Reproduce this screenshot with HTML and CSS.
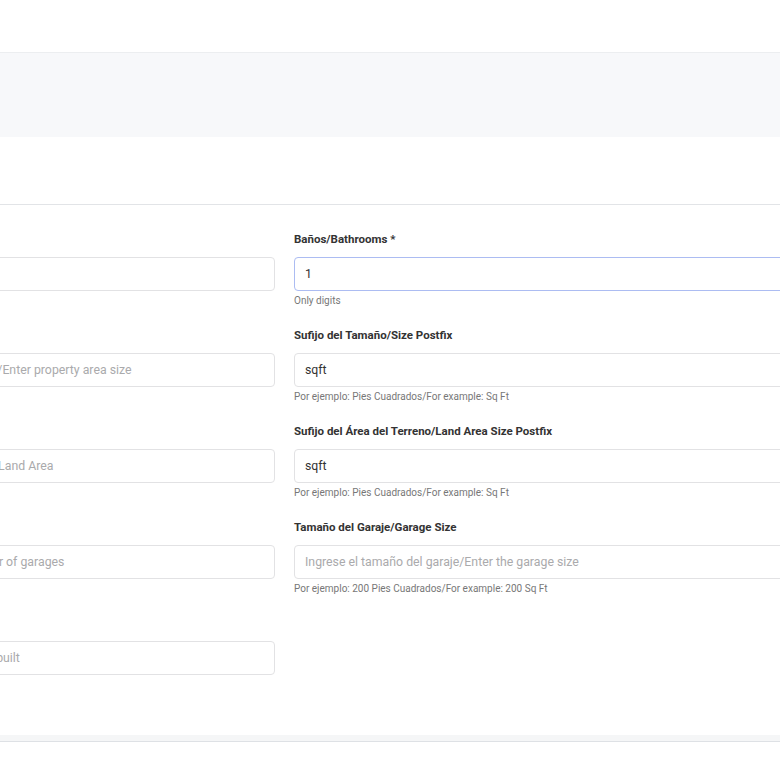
FILE: index.html
```html
<!DOCTYPE html>
<html lang="es">

<head>
    <meta charset="UTF-8">
    <meta name="viewport" content="width=device-width, initial-scale=1.0">
    <title>Detalles de la propiedad</title>
    <link rel="stylesheet" href="styles.css">
</head>

<body>
    <div class="top-bar"></div>
    <div class="page-header"></div>

    <div class="section-title"></div>

    <div class="form-wrap">
        <div class="form-grid">
            <div class="form-group">
                <label class="form-label">Habitaciones/Bedrooms</label>
                <input type="text" class="form-input">
            </div>
            <div class="form-group">
                <label class="form-label">Baños/Bathrooms *</label>
                <input type="text" class="form-input is-focused" value="1">
                <div class="form-help">Only digits</div>
            </div>

            <div class="form-group">
                <label class="form-label">Tamaño/Area Size</label>
                <input type="text" class="form-input" placeholder="Ingrese el tamaño de la propiedad/Enter property area size">
            </div>
            <div class="form-group">
                <label class="form-label">Sufijo del Tamaño/Size Postfix</label>
                <input type="text" class="form-input" value="sqft">
                <div class="form-help">Por ejemplo: Pies Cuadrados/For example: Sq Ft</div>
            </div>

            <div class="form-group">
                <label class="form-label">Área del Terreno/Land Area</label>
                <input type="text" class="form-input" placeholder="Ingrese área del terreno/Enter the Land Area">
            </div>
            <div class="form-group">
                <label class="form-label">Sufijo del Área del Terreno/Land Area Size Postfix</label>
                <input type="text" class="form-input" value="sqft">
                <div class="form-help">Por ejemplo: Pies Cuadrados/For example: Sq Ft</div>
            </div>

            <div class="form-group">
                <label class="form-label">Garajes/Garages</label>
                <input type="text" class="form-input" placeholder="Cantidad garajes/Enter the number of garages">
            </div>
            <div class="form-group">
                <label class="form-label">Tamaño del Garaje/Garage Size</label>
                <input type="text" class="form-input" placeholder="Ingrese el tamaño del garaje/Enter the garage size">
                <div class="form-help">Por ejemplo: 200 Pies Cuadrados/For example: 200 Sq Ft</div>
            </div>

            <div class="form-group">
                <label class="form-label">Año de construcción/Year Built</label>
                <input type="text" class="form-input" placeholder="Año de edificación/Enter the year built">
            </div>
        </div>
    </div>

    <div class="page-footer"></div>
</body>

</html>
```

FILE: styles.css
```css
html,
body {
    overflow-x: hidden;
}

body {
    margin: 0;
    background-color: white;
    font-family: Roboto, "Liberation Sans", sans-serif;
    color: rgb(51, 51, 51);
}

.top-bar {
    height: 52px;
    background-color: white;
    border-bottom: 1px solid rgb(236, 238, 240);
}

.page-header {
    height: 84px;
    background-color: rgb(247, 248, 250);
}

.section-title {
    height: 67px;
    border-bottom: 1px solid rgb(226, 228, 231);
}

.form-wrap {
    padding-top: 25px;
    padding-bottom: 60px;
}

.form-grid {
    display: grid;
    grid-template-columns: 474px 500px;
    column-gap: 19px;
    row-gap: 18px;
    margin-left: -199px;
    align-items: start;
}

.form-group {
    display: flex;
    flex-direction: column;
}

.form-label {
    font-size: 11.5px;
    font-weight: bold;
    line-height: 18px;
    margin-bottom: 9px;
    white-space: nowrap;
}

.form-input {
    box-sizing: border-box;
    height: 34px;
    padding: 0 10px;
    border: 1px solid rgb(226, 226, 228);
    border-radius: 4px;
    font-family: Roboto, "Liberation Sans", sans-serif;
    font-size: 12.3px;
    color: rgb(51, 51, 51);
    background-color: white;
    outline: none;
}

.form-input::placeholder {
    color: rgb(170, 170, 172);
}

.is-focused {
    border-color: rgb(172, 188, 242);
}

.form-help {
    margin-top: 3px;
    font-size: 10px;
    line-height: 14px;
    color: rgb(119, 119, 119);
}

.page-footer {
    height: 6px;
    background-color: rgb(245, 246, 247);
    border-bottom: 1px solid rgb(222, 225, 229);
    margin-bottom: 60px;
}
```
